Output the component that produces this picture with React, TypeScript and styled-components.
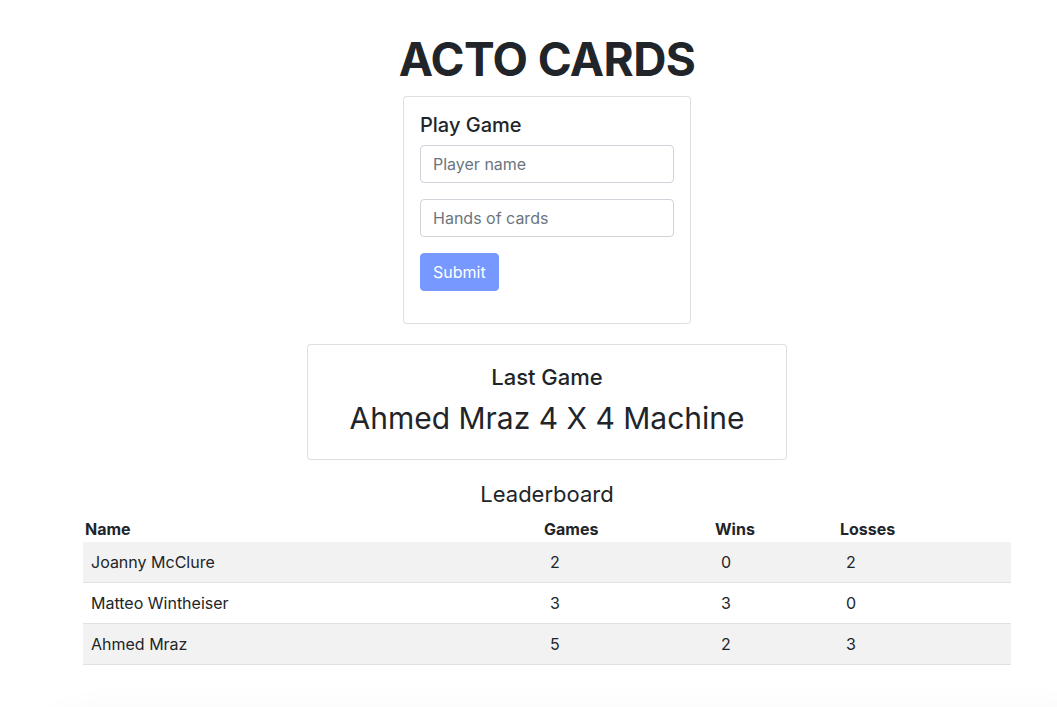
import React from "react";
import styled, { createGlobalStyle } from "styled-components";

const Global = createGlobalStyle`
  html, body { margin: 0; padding: 0; background: #fff; }
  body {
    font-family: Inter, "Noto Sans", "Liberation Sans", sans-serif;
    color: #212529;
    font-size: 16px;
    line-height: 1.5;
    overflow: hidden;
  }
  * { box-sizing: border-box; }
`;

const Page = styled.div`
  width: 1057px;
  height: 707px;
  position: relative;
  overflow: hidden;
`;

const Column = styled.main`
  margin-left: 83px;
  width: 928px;
  display: flex;
  flex-direction: column;
  align-items: center;
  padding-top: 32px;
`;

const Title = styled.h1`
  margin: 0 0 9px;
  font-size: 46px;
  font-weight: 700;
  line-height: 1.2;
  letter-spacing: -0.6px;
`;

const Card = styled.section<{ $width: number; $center?: boolean }>`
  width: ${(p) => p.$width}px;
  border: 1px solid rgba(0, 0, 0, 0.125);
  border-radius: 4px;
  padding: 16px;
  display: flex;
  flex-direction: column;
  align-items: ${(p) => (p.$center ? "center" : "stretch")};
  background: #fff;
`;

const CardTitle = styled.h5`
  margin: 0 0 8px;
  font-size: 20px;
  font-weight: 500;
  line-height: 1.2;
`;

const Input = styled.input`
  display: block;
  width: 100%;
  height: 38px;
  padding: 6px 12px;
  font: inherit;
  font-size: 16px;
  color: #495057;
  border: 1px solid #ced4da;
  border-radius: 4px;
  margin-bottom: 16px;
  &::placeholder { color: #6c757d; }
`;

const Button = styled.button`
  align-self: flex-start;
  height: 38px;
  padding: 6px 12px;
  font: inherit;
  font-size: 16px;
  color: #fff;
  background: #7698ff;
  border: 1px solid #7698ff;
  border-radius: 4px;
  margin-bottom: 16px;
`;

const LastCard = styled(Card)`
  margin-top: 20px;
  padding: 19px 16px 21px;
`;

const LastTitle = styled.h4`
  margin: 0 0 8px;
  font-size: 22px;
  font-weight: 500;
  line-height: 1.2;
`;

const Result = styled.h2`
  margin: 0;
  font-size: 30px;
  font-weight: 400;
  line-height: 1.3;
`;

const BoardTitle = styled.h4`
  margin: 21px 0 14px;
  font-size: 22px;
  font-weight: 400;
  line-height: 1.2;
`;

const Table = styled.table`
  width: 928px;
  border-collapse: collapse;
  font-size: 16px;
`;

const Th = styled.th<{ $w: number }>`
  width: ${(p) => p.$w}px;
  text-align: left;
  font-weight: 700;
  padding: 0 2px 3px;
  line-height: 1.1;
`;

const Tr = styled.tr<{ $striped: boolean }>`
  background: ${(p) => (p.$striped ? "#f2f2f2" : "#fff")};
  border-bottom: 1px solid #dee2e6;
`;

const Td = styled.td`
  padding: 8px;
  height: 40px;
  text-align: left;
`;

const Shadow = styled.div`
  position: absolute;
  left: 50px;
  right: -40px;
  top: 722px;
  height: 100px;
  border-radius: 40px;
  box-shadow: 0 0 40px 6px rgba(0, 0, 0, 0.045);
`;

const rows = [
  { name: "Joanny McClure", games: 2, wins: 0, losses: 2 },
  { name: "Matteo Wintheiser", games: 3, wins: 3, losses: 0 },
  { name: "Ahmed Mraz", games: 5, wins: 2, losses: 3 },
];

export default function App() {
  return (
    <Page>
      <Global />
      <Column>
        <Title>ACTO CARDS</Title>
        <Card $width={288}>
          <CardTitle>Play Game</CardTitle>
          <Input placeholder="Player name" />
          <Input placeholder="Hands of cards" />
          <Button>Submit</Button>
        </Card>
        <LastCard $width={480} $center>
          <LastTitle>Last Game</LastTitle>
          <Result>Ahmed Mraz 4 X 4 Machine</Result>
        </LastCard>
        <BoardTitle>Leaderboard</BoardTitle>
        <Table>
          <thead>
            <tr>
              <Th $w={459}>Name</Th>
              <Th $w={171}>Games</Th>
              <Th $w={125}>Wins</Th>
              <Th $w={173}>Losses</Th>
            </tr>
          </thead>
          <tbody>
            {rows.map((r, i) => (
              <Tr key={r.name} $striped={i % 2 === 0}>
                <Td>{r.name}</Td>
                <Td>{r.games}</Td>
                <Td>{r.wins}</Td>
                <Td>{r.losses}</Td>
              </Tr>
            ))}
          </tbody>
        </Table>
      </Column>
      <Shadow />
    </Page>
  );
}
